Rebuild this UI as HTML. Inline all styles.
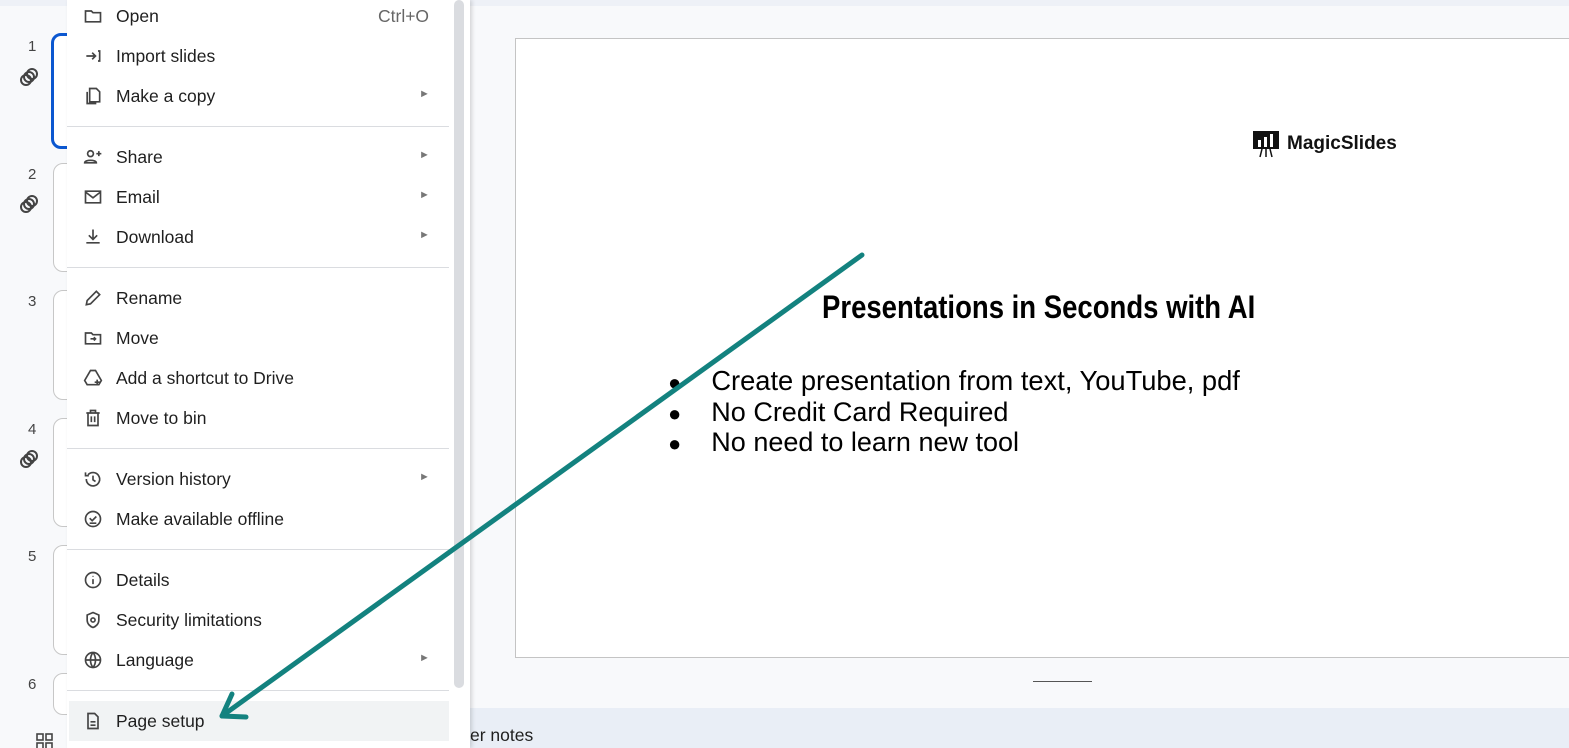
<!DOCTYPE html>
<html><head><meta charset="utf-8"><style>
body{margin:0;width:1569px;height:748px;overflow:hidden;background:#f8f9fb;font-family:"Liberation Sans",sans-serif;position:relative}
.abs{position:absolute}
.num{position:absolute;left:28px;font-size:15px;color:#444}
.th{position:absolute;left:53px;width:60px;border:1px solid #c7c7c7;border-radius:10px;background:#fff}
.menu{position:absolute;left:67px;top:0;width:403px;height:748px;background:#fff;box-shadow:2px 0 4px rgba(0,0,0,.15)}
.it{position:absolute;left:0;width:382px;height:40px;font-size:17.5px;color:#1f1f1f}
.it span.t{position:absolute;left:49px;top:10px}
.it svg{position:absolute;left:16px;top:10px}
.ar{position:absolute;left:352px;top:12px;font-size:11px;color:#777}
.sep{position:absolute;left:0;width:382px;height:1px;background:#dadce0}
</style></head><body>
<div class="abs" style="left:0;top:0;width:1569px;height:6px;background:#eef1f7"></div>
<div class="abs" style="left:515px;top:38px;width:1060px;height:618px;background:#fff;border:1px solid #c4c4c4"></div>
<div class="abs" style="left:1033px;top:681px;width:59px;height:1px;background:#555"></div>
<div class="abs" style="left:440px;top:708px;width:1129px;height:40px;background:#e9eef6"></div>
<div class="abs" style="left:470px;top:725px;font-size:17.5px;color:#1f1f1f">er notes</div>
<svg class="abs" style="left:36px;top:733px" width="18" height="15" viewBox="0 0 18 15" fill="none" stroke="#444" stroke-width="1.6"><rect x="1" y="1" width="6" height="6"/><rect x="10" y="1" width="6" height="6"/><rect x="1" y="10" width="6" height="6"/><rect x="10" y="10" width="6" height="6"/></svg>

<div class="num" style="top:38px">1</div><div class="num" style="top:166px">2</div><div class="num" style="top:293px">3</div><div class="num" style="top:421px">4</div><div class="num" style="top:548px">5</div><div class="num" style="top:676px">6</div>
<div class="th" style="top:33px;height:110px;border:3px solid #0b57d0;left:51px"></div>
<div class="th" style="top:163px;height:107px"></div>
<div class="th" style="top:290px;height:108px"></div>
<div class="th" style="top:418px;height:107px"></div>
<div class="th" style="top:545px;height:108px"></div>
<div class="th" style="top:673px;height:40px"></div>
<svg class="abs" style="left:18px;top:66px" width="22" height="22" viewBox="0 0 22 22" fill="none" stroke="#444" stroke-width="2"><circle cx="8" cy="14" r="5"/><circle cx="11" cy="11" r="5"/><circle cx="14" cy="8" r="5"/></svg>
<svg class="abs" style="left:18px;top:193px" width="22" height="22" viewBox="0 0 22 22" fill="none" stroke="#444" stroke-width="2"><circle cx="8" cy="14" r="5"/><circle cx="11" cy="11" r="5"/><circle cx="14" cy="8" r="5"/></svg>
<svg class="abs" style="left:18px;top:448px" width="22" height="22" viewBox="0 0 22 22" fill="none" stroke="#444" stroke-width="2"><circle cx="8" cy="14" r="5"/><circle cx="11" cy="11" r="5"/><circle cx="14" cy="8" r="5"/></svg>

<svg class="abs" style="left:1253px;top:131px" width="27" height="27" viewBox="0 0 27 27"><rect x="0" y="0" width="26" height="18" fill="#111"/><rect x="5" y="9" width="3" height="7" fill="#fff"/><rect x="11" y="6" width="3" height="10" fill="#fff"/><rect x="17" y="3" width="3" height="13" fill="#fff"/><path d="M9 18l-2 8M13 18v8M17 18l2 8" stroke="#111" stroke-width="1.5"/></svg>
<div class="abs" style="left:1287px;top:133px;font-size:19px;font-weight:bold;color:#111">MagicSlides</div>
<div class="abs" style="left:822px;top:289px;font-size:32px;font-weight:bold;color:#000;transform:scaleX(.86);transform-origin:left">Presentations in Seconds with AI</div>
<div class="abs" style="left:668px;top:366px;font-size:27px;line-height:29.5px;color:#000">
<div><span style="font-size:22px">●</span>&nbsp;&nbsp;&nbsp;&nbsp;<span style="font-size:27.3px">Create presentation from text, YouTube, pdf</span></div>
<div><span style="font-size:22px">●</span>&nbsp;&nbsp;&nbsp;&nbsp;No Credit Card Required</div>
<div><span style="font-size:22px">●</span>&nbsp;&nbsp;&nbsp;&nbsp;No need to learn new tool</div></div>

<div class="menu">
<div class="abs" style="left:387px;top:0;width:10px;height:688px;background:#dadce0;border-radius:5px"></div>
<div class="abs" style="left:2px;top:701px;width:380px;height:40px;background:#f1f3f4"></div>
<div class="it" style="top:-4px"><svg width="20" height="20" viewBox="0 0 24 24" fill="none" stroke="#444" stroke-width="2"><path d="M3 6h7l2 2h9v11H3z"/></svg><span class="t">Open</span><span style="position:absolute;left:311px;top:10px;color:#666">Ctrl+O</span></div>
<div class="it" style="top:36px"><svg width="20" height="20" viewBox="0 0 24 24" fill="none" stroke="#444" stroke-width="2"><path d="M4 12h10M11 8l4 4-4 4M18 6h2v12h-2"/></svg><span class="t">Import slides</span></div>
<div class="it" style="top:76px"><svg width="20" height="20" viewBox="0 0 24 24" fill="none" stroke="#444" stroke-width="2"><path d="M8 3h8l4 4v12H8zM5 7v14h11"/></svg><span class="t">Make a copy</span><span class="ar">►</span></div>
<div class="sep" style="top:126px"></div>
<div class="it" style="top:137px"><svg width="20" height="20" viewBox="0 0 24 24" fill="none" stroke="#444" stroke-width="2"><circle cx="9" cy="8" r="3.5"/><path d="M2 19c0-4 14-4 14 0zM19 5v6M16 8h6"/></svg><span class="t">Share</span><span class="ar">►</span></div>
<div class="it" style="top:177px"><svg width="20" height="20" viewBox="0 0 24 24" fill="none" stroke="#444" stroke-width="2"><path d="M3 5h18v14H3zM3 6l9 7 9-7"/></svg><span class="t">Email</span><span class="ar">►</span></div>
<div class="it" style="top:217px"><svg width="20" height="20" viewBox="0 0 24 24" fill="none" stroke="#444" stroke-width="2"><path d="M12 3v12M7 10l5 5 5-5M4 19h16"/></svg><span class="t">Download</span><span class="ar">►</span></div>
<div class="sep" style="top:267px"></div>
<div class="it" style="top:278px"><svg width="20" height="20" viewBox="0 0 24 24" fill="none" stroke="#444" stroke-width="2"><path d="M4 20l1-5L16 4l4 4L9 19z"/></svg><span class="t">Rename</span></div>
<div class="it" style="top:318px"><svg width="20" height="20" viewBox="0 0 24 24" fill="none" stroke="#444" stroke-width="2"><path d="M3 6h7l2 2h9v11H3zM9 13h6M13 11l2 2-2 2"/></svg><span class="t">Move</span></div>
<div class="it" style="top:358px"><svg width="20" height="20" viewBox="0 0 24 24" fill="none" stroke="#444" stroke-width="2"><path d="M9 3h6l7 12-3 5H5l-3-5zM17 14v6M14 17h6"/></svg><span class="t">Add a shortcut to Drive</span></div>
<div class="it" style="top:398px"><svg width="20" height="20" viewBox="0 0 24 24" fill="none" stroke="#444" stroke-width="2"><path d="M4 6h16M9 6V3h6v3M6 6v15h12V6M10 10v7M14 10v7"/></svg><span class="t">Move to bin</span></div>
<div class="sep" style="top:448px"></div>
<div class="it" style="top:459px"><svg width="20" height="20" viewBox="0 0 24 24" fill="none" stroke="#444" stroke-width="2"><path d="M4 12a8 8 0 1 0 2-5M3 4v4h4M12 8v5l3 2"/></svg><span class="t">Version history</span><span class="ar">►</span></div>
<div class="it" style="top:499px"><svg width="20" height="20" viewBox="0 0 24 24" fill="none" stroke="#444" stroke-width="2"><circle cx="12" cy="12" r="9"/><path d="M8 11l3 3 5-5M8 17h8"/></svg><span class="t">Make available offline</span></div>
<div class="sep" style="top:549px"></div>
<div class="it" style="top:560px"><svg width="20" height="20" viewBox="0 0 24 24" fill="none" stroke="#444" stroke-width="2"><circle cx="12" cy="12" r="9"/><path d="M12 11v6M12 7v1"/></svg><span class="t">Details</span></div>
<div class="it" style="top:600px"><svg width="20" height="20" viewBox="0 0 24 24" fill="none" stroke="#444" stroke-width="2"><path d="M12 3l7 3v6c0 5-4 8-7 9-3-1-7-4-7-9V6z"/><circle cx="12" cy="12" r="2.5"/></svg><span class="t">Security limitations</span></div>
<div class="it" style="top:640px"><svg width="20" height="20" viewBox="0 0 24 24" fill="none" stroke="#444" stroke-width="2"><circle cx="12" cy="12" r="9"/><path d="M3 12h18M12 3c-4 5-4 13 0 18M12 3c4 5 4 13 0 18"/></svg><span class="t">Language</span><span class="ar">►</span></div>
<div class="sep" style="top:690px"></div>
<div class="it" style="top:701px"><svg width="20" height="20" viewBox="0 0 24 24" fill="none" stroke="#444" stroke-width="2"><path d="M6 3h8l4 4v14H6zM9 13h6M9 17h6"/></svg><span class="t">Page setup</span></div>
</div>

<svg class="abs" style="left:0;top:0" width="1569" height="748"><g stroke="#13827f" stroke-width="5" stroke-linecap="round" fill="none"><path d="M862 255L222 716"/><path d="M222 716L232 694M222 716L246 717"/></g></svg>
</body></html>
